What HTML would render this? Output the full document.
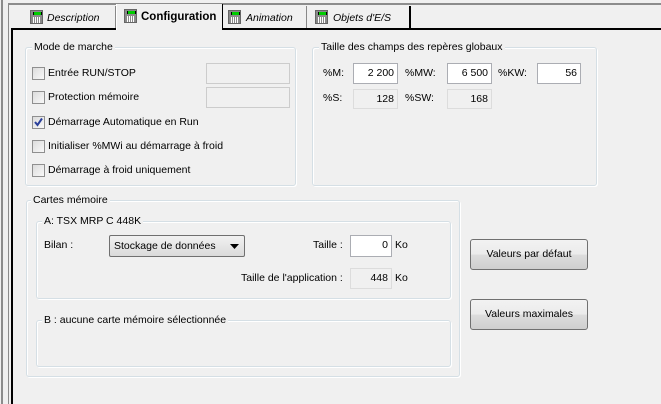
<!DOCTYPE html>
<html><head><meta charset="utf-8"><style>
*{box-sizing:border-box;margin:0;padding:0}
body{width:661px;height:404px;background:#f0f0f0;font-family:"Liberation Sans",Tahoma,sans-serif;font-size:10.5px;color:#000;position:relative;overflow:hidden}
.a{position:absolute}
.t{position:absolute;white-space:nowrap;line-height:13px}
.grp{position:absolute;border:1px solid #d5dfe5;border-radius:3px;box-shadow:inset 1px 1px 0 #fff,1px 1px 0 #fff}
.gt{position:absolute;top:-8px;left:6px;background:#f0f0f0;padding:0 2px;line-height:14px;white-space:nowrap}
.inp{position:absolute;background:#fff;border:1px solid #abadb3;text-align:right;padding-right:3px;line-height:19px}
.dis{background:#f0f0f0;border-color:#dcdcdc;}
.cb{position:absolute;width:13px;height:13px;border:1px solid #8f8f8f;background:linear-gradient(135deg,#dcdcdc,#f8f8f8)}
.btn{position:absolute;border:1px solid #707070;border-radius:3px;background:linear-gradient(#f2f2f2 0,#ebebeb 50%,#dddddd 51%,#cfcfcf 100%);text-align:center;line-height:29px}
.tab{position:absolute;top:6px;height:22px;border-right:1px solid #888;}
.tab i{font-style:italic}
.ic{position:absolute;width:13px;height:14px;background:#8a8a8a;border:1px solid #666}
.ic:before{content:"";position:absolute;left:2px;top:1px;width:7px;height:3px;background:#0c0;border-left:1px solid #000;border-right:1px solid #000}
.ic:after{content:"";position:absolute;left:2px;top:6px;width:7px;height:6px;background:repeating-linear-gradient(90deg,#fff 0 1px,#8a8a8a 1px 2px)}
</style></head><body>
<div class="a" style="left:1px;top:0;width:2px;height:404px;background:#8c8c8c"></div>
<div class="a" style="left:8px;top:3px;width:653px;height:2px;background:#8c8c8c"></div>
<div class="a" style="left:8px;top:3px;width:1px;height:401px;background:#8c8c8c"></div>
<div class="a" style="left:11px;top:28px;width:650px;height:2px;background:#000"></div>
<div class="a" style="left:11px;top:28px;width:2px;height:376px;background:#000"></div>

<div class="tab" style="left:25px;width:91px"><div class="ic" style="left:5px;top:4px"></div><span class="t" style="left:22px;top:6px"><i>Description</i></span></div>
<div class="a" style="left:116px;top:4px;width:107px;height:26px;background:#f0f0f0;border-left:1px solid #fff;border-right:1px solid #000"></div>
<div class="ic" style="left:124px;top:9px"></div>
<span class="t" style="left:141px;top:11px;font-weight:bold;font-size:11.5px">Configuration</span>
<div class="tab" style="left:223px;width:84px"><div class="ic" style="left:5px;top:4px"></div><span class="t" style="left:23px;top:6px"><i>Animation</i></span></div>
<div class="tab" style="left:307px;width:104px;border-right:2px solid #000"><div class="ic" style="left:8px;top:4px"></div><span class="t" style="left:26px;top:6px"><i>Objets d'E/S</i></span></div>

<div class="grp" style="left:25px;top:47px;width:271px;height:139px"><span class="gt">Mode de marche</span></div>
<div class="cb" style="left:32px;top:67px"></div><span class="t" style="left:48px;top:67px">Entrée RUN/STOP</span>
<div class="inp dis" style="left:206px;top:63px;width:84px;height:21px;border-color:#ccc"></div>
<div class="cb" style="left:32px;top:91px"></div><span class="t" style="left:48px;top:91px">Protection mémoire</span>
<div class="inp dis" style="left:206px;top:87px;width:84px;height:21px;border-color:#ccc"></div>
<div class="cb" style="left:32px;top:116px"><svg width="11" height="11" style="position:absolute;left:0;top:0"><path d="M2 5 L4.5 8 L9 1.5" stroke="#2a3f9a" stroke-width="2" fill="none"/></svg></div><span class="t" style="left:48px;top:116px">Démarrage Automatique en Run</span>
<div class="cb" style="left:32px;top:140px"></div><span class="t" style="left:48px;top:140px">Initialiser %MWi au démarrage à froid</span>
<div class="cb" style="left:32px;top:164px"></div><span class="t" style="left:48px;top:164px">Démarrage à froid uniquement</span>

<div class="grp" style="left:312px;top:47px;width:285px;height:139px"><span class="gt">Taille des champs des repères globaux</span></div>
<span class="t" style="left:323px;top:67px">%M:</span>
<div class="inp" style="left:353px;top:63px;width:45px;height:21px">2 200</div>
<span class="t" style="left:405px;top:67px">%MW:</span>
<div class="inp" style="left:447px;top:63px;width:45px;height:21px">6 500</div>
<span class="t" style="left:498px;top:67px">%KW:</span>
<div class="inp" style="left:537px;top:63px;width:44px;height:21px">56</div>
<span class="t" style="left:323px;top:92px">%S:</span>
<div class="inp dis" style="left:353px;top:89px;width:45px;height:20px">128</div>
<span class="t" style="left:405px;top:92px">%SW:</span>
<div class="inp dis" style="left:447px;top:89px;width:45px;height:20px">168</div>

<div class="grp" style="left:26px;top:200px;width:434px;height:177px"><span class="gt" style="left:4px">Cartes mémoire</span></div>
<div class="grp" style="left:36px;top:221px;width:415px;height:78px"><span class="gt" style="left:5px">A: TSX MRP C 448K</span></div>
<span class="t" style="left:44px;top:239px">Bilan :</span>
<div class="a" style="left:109px;top:235px;width:136px;height:22px;border:1px solid #707070;border-radius:2px;background:linear-gradient(#f2f2f2,#e6e6e6 50%,#dadada)"><span class="t" style="left:4px;top:4px">Stockage de données</span><svg class="a" style="left:120px;top:8px" width="9" height="5"><path d="M0 0H9L4.5 5Z" fill="#000"/></svg></div>
<span class="t" style="left:313px;top:239px">Taille :</span>
<div class="inp" style="left:350px;top:235px;width:42px;height:22px">0</div>
<span class="t" style="left:395px;top:239px">Ko</span>
<span class="t" style="left:241px;top:272px">Taille de l'application :</span>
<div class="inp dis" style="left:350px;top:268px;width:42px;height:21px">448</div>
<span class="t" style="left:395px;top:272px">Ko</span>

<div class="grp" style="left:36px;top:320px;width:415px;height:47px"><span class="gt" style="left:5px">B : aucune carte mémoire sélectionnée</span></div>

<div class="btn" style="left:470px;top:239px;width:118px;height:31px">Valeurs par défaut</div>
<div class="btn" style="left:470px;top:299px;width:118px;height:31px">Valeurs maximales</div>
</body></html>
